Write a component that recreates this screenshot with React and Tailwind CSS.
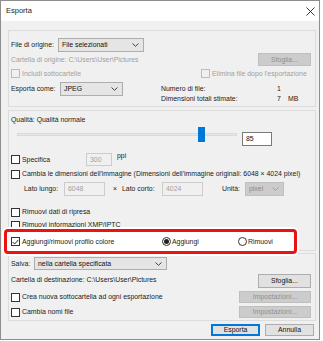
import React from "react";

const Chevron = ({ disabled }) => (
  <svg width="7" height="4" viewBox="0 0 7 4" className="shrink-0">
    <path d="M0.5 0.5 L3.5 3.3 L6.5 0.5" fill="none" stroke={disabled ? "#9a9a9a" : "#333"} strokeWidth="0.9" />
  </svg>
);

const Dropdown = ({ value, w, h = "h-[14px]", disabled }) => (
  <div
    className={`${w} ${h} flex items-center justify-between pl-[3px] pr-[4px] border ${
      disabled ? "bg-[#cccccc] border-[#bfbfbf] text-[#8a8a8a]" : "bg-[#e5e5e5] border-[#adadad] text-[#111]"
    }`}
  >
    <span>{value}</span>
    <Chevron disabled={disabled} />
  </div>
);

const Button = ({ label, w, h = "h-[13px]", disabled, primary }) => (
  <div
    className={`${w} ${h} flex items-center justify-center border ${
      disabled
        ? "bg-[#cccccc] border-[#bfbfbf] text-[#8f8f8f]"
        : primary
        ? "bg-[#e1e1e1] border-[#0078d7] shadow-[inset_0_0_0_1px_#0078d7] text-[#111]"
        : "bg-[#e1e1e1] border-[#adadad] text-[#111]"
    }`}
  >
    {label}
  </div>
);

const Check = ({ checked, disabled }) => (
  <div
    className={`w-[9px] h-[9px] shrink-0 border flex items-center justify-center ${
      disabled ? "border-[#bcbcbc] bg-[#f0f0f0]" : "border-[#333] bg-white"
    }`}
  >
    {checked && (
      <svg width="7" height="6" viewBox="0 0 7 6">
        <path d="M0.6 3 L2.6 5 L6.4 0.8" fill="none" stroke="#222" strokeWidth="1" />
      </svg>
    )}
  </div>
);

const CheckRow = ({ label, checked, disabled, className = "" }) => (
  <div className={`flex items-center gap-[2px] ${className}`}>
    <Check checked={checked} disabled={disabled} />
    <span className={disabled ? "text-[#a0a0a0]" : ""}>{label}</span>
  </div>
);

const Radio = ({ label, selected }) => (
  <div className="flex items-center gap-[1px]">
    <div className="w-[9px] h-[9px] rounded-full border border-[#333] bg-white flex items-center justify-center">
      {selected && <div className="w-[5px] h-[5px] rounded-full bg-[#222]" />}
    </div>
    <span>{label}</span>
  </div>
);

const Field = ({ value, w, h = "h-[14px]", disabled }) => (
  <div
    className={`${w} ${h} flex items-center pl-[3px] border ${
      disabled ? "bg-[#f0f0f0] border-[#cccccc] text-[#a0a0a0]" : "bg-white border-[#7a7a7a] text-[#111]"
    }`}
  >
    {value}
  </div>
);

export default function App() {
  return (
    <div className="w-[323px] h-[341px] bg-white font-['Liberation_Sans',Arial,sans-serif] text-[6.9px] leading-[10px] text-[#1a1a1a]">
      <div className="relative w-[320px] h-[340px] border border-[#8e8e8e] bg-[#f0f0f0] flex flex-col">
        {/* title bar */}
        <div className="h-[20px] bg-white flex items-center justify-between pl-[5px] pr-[4px] text-[7.5px]">
          <span>Esporta</span>
          <svg width="9" height="9" viewBox="0 0 9 9">
            <path d="M0.5 0.5 L8.5 8.5 M8.5 0.5 L0.5 8.5" stroke="#222" strokeWidth="0.9" />
          </svg>
        </div>

        {/* origine */}
        <div className="ml-[7px] mt-[9px] w-[308px] h-[77px] border border-[#dcdcdc] pl-[2px] pr-[4px]">
          <div className="mt-[7px] h-[14px] flex items-center">
            <span className="w-[47px]">File di origine:</span>
            <Dropdown value="File selezionati" w="w-[86px]" />
          </div>
          <div className="h-[15px] flex items-center justify-between">
            <span className="text-[#a0a0a0]">Cartella di origine: C:\Users\User\Pictures</span>
            <Button label="Sfoglia..." w="w-[53px]" disabled />
          </div>
          <div className="h-[13px] flex items-center">
            <CheckRow label="Includi sottocartelle" disabled className="w-[190px]" />
            <CheckRow label="Elimina file dopo l'esportazione" disabled />
          </div>
          <div className="mt-[2px] flex">
            <div className="w-[150px] h-[14px] flex items-center">
              <span className="w-[49px]">Esporta come:</span>
              <Dropdown value="JPEG" w="w-[63px]" />
            </div>
            <div className="pt-[2px] grid grid-cols-[116px_11px_auto]">
              <span>Numero di file:</span>
              <span>1</span>
              <span />
              <span>Dimensioni totali stimate:</span>
              <span>7</span>
              <span>MB</span>
            </div>
          </div>
        </div>

        {/* impostazioni file */}
        <div className="ml-[7px] mt-[3px] w-[308px] h-[141px] border border-[#dcdcdc] pl-[2px] pr-[4px]">
          <div className="mt-[4px] h-[10px]">Qualità: Qualità normale</div>
          <div className="mt-[2px] h-[19px] flex">
            <div className="relative ml-[6px] w-[220px] h-[15px] flex items-center">
              <div className="w-full h-[3px] bg-[#e7e7e7] border border-[#dadada]" />
              <div className="absolute left-[181px] top-0 w-[7px] h-[15px] bg-[#0078d7]" />
            </div>
            <div className="ml-[5px] mt-[5px]">
              <Field value="85" w="w-[30px]" />
            </div>
          </div>
          <div className="mt-[7px] h-[13px] flex">
            <CheckRow label="Specifica" className="w-[75px]" />
            <Field value="300" w="w-[26px]" h="h-[13px]" disabled />
            <span className="ml-[5px] -mt-[2px]">ppi</span>
          </div>
          <CheckRow
            label="Cambia le dimensioni dell'immagine (Dimensioni dell'immagine originali: 6048 × 4024 pixel)"
            className="mt-[3px] h-[10px]"
          />
          <div className="mt-[3px] h-[14px] flex items-center pl-[13px]">
            <span className="w-[40px]">Lato lungo:</span>
            <Field value="6048" w="w-[41px]" disabled />
            <span className="ml-[8px] w-[9px]">×</span>
            <span className="w-[40px]">Lato corto:</span>
            <Field value="4024" w="w-[41px]" disabled />
            <span className="ml-[19px] w-[23px]">Unità:</span>
            <Dropdown value="pixel" w="w-[39px]" disabled />
          </div>
          <CheckRow label="Rimuovi dati di ripresa" className="mt-[11px] h-[10px]" />
          <CheckRow label="Rimuovi informazioni XMP/IPTC" className="mt-[3px] h-[10px]" />
        </div>

        {/* destinazione */}
        <div className="ml-[7px] mt-[2px] w-[308px] h-[68px] border border-[#dcdcdc] pl-[2px] pr-[4px]">
          <div className="mt-[3px] h-[13px] flex items-center">
            <span className="w-[23px]">Salva:</span>
            <Dropdown value="nella cartella specificata" w="w-[133px]" h="h-[13px]" />
          </div>
          <div className="mt-[4px] h-[14px] flex items-center justify-between">
            <span className="pb-[3px]">Cartella di destinazione: C:\Users\User\Pictures</span>
            <Button label="Sfoglia..." w="w-[53px]" h="h-[14px]" />
          </div>
          <div className="mt-[3px] h-[12px] flex items-center justify-between">
            <CheckRow label="Crea nuova sottocartella ad ogni esportazione" />
            <Button label="Impostazioni..." w="w-[72px]" h="h-[12px]" disabled />
          </div>
          <div className="mt-[3px] h-[12px] flex items-center justify-between">
            <CheckRow label="Cambia nomi file" />
            <Button label="Impostazioni..." w="w-[72px]" h="h-[12px]" disabled />
          </div>
        </div>

        <div className="mt-[3px] flex justify-end gap-[5px] pr-[5px]">
          <Button label="Esporta" w="w-[49px]" h="h-[12px]" primary />
          <Button label="Annulla" w="w-[49px]" h="h-[12px]" />
        </div>

        {/* evidenziazione */}
        <div className="absolute left-[3px] top-[228px] w-[293px] h-[25px] rounded-[4px] border-[3px] border-[#ee1111] bg-white shadow-[0_0_0_2px_#ffffff] flex items-center pl-[4px]">
          <CheckRow label="Aggiungi/rimuovi profilo colore" checked className="w-[151px]" />
          <div className="w-[76px]">
            <Radio label="Aggiungi" selected />
          </div>
          <Radio label="Rimuovi" />
        </div>
      </div>
    </div>
  );
}
